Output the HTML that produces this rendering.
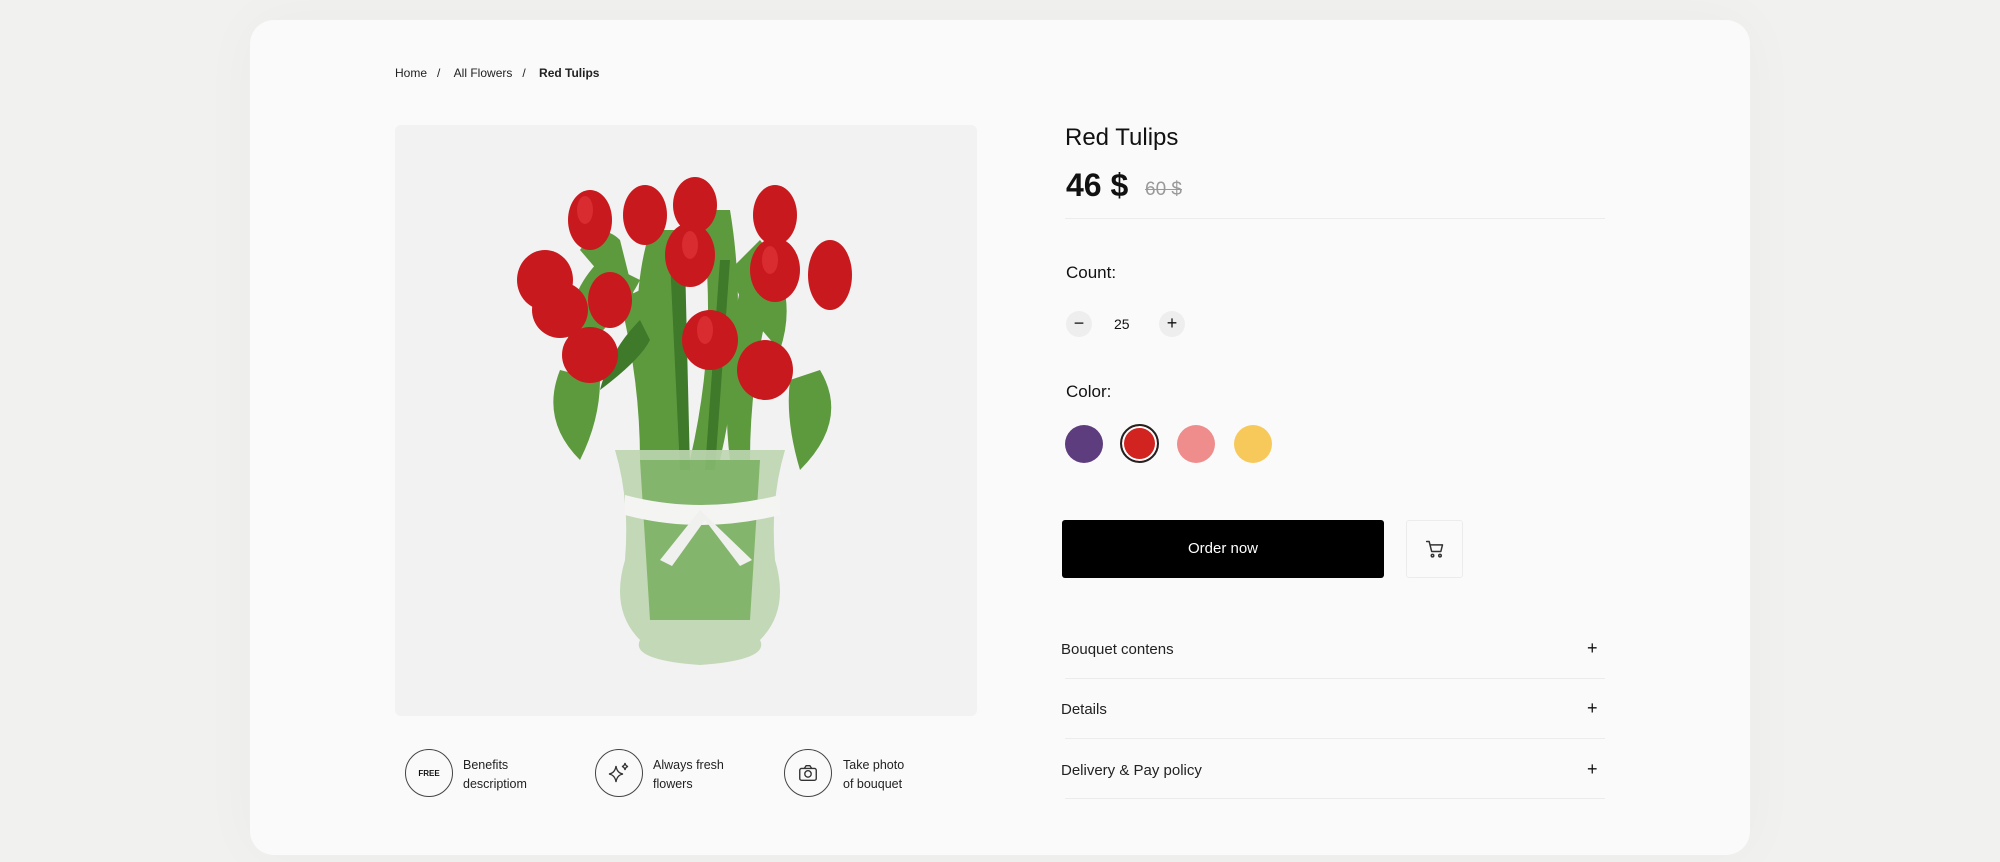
<!DOCTYPE html>
<html><head><meta charset="utf-8"><style>
*{margin:0;padding:0;box-sizing:border-box}
body{width:2000px;height:862px;background:#f1f1ef;font-family:"Liberation Sans",sans-serif;color:#111;position:relative;overflow:hidden}
.card{position:absolute;left:250px;top:20px;width:1500px;height:835px;background:#fafafa;border-radius:24px;box-shadow:0 0 60px rgba(0,0,0,0.03)}
.a{position:absolute;white-space:nowrap}
.crumb{top:66px;left:395px;font-size:12px;color:#222}
.img{left:395px;top:125px;width:582px;height:591px;background:#f2f2f2;border-radius:6px}
.circ{border-radius:50%}
.acc{font-size:15px;color:#222}
.plus{font-size:18px;color:#111}
.div{position:absolute;height:1px;background:#ececec;left:1065px;width:540px}
.ben{width:48px;height:48px;border:1.5px solid #444;border-radius:50%;top:749px;display:flex;align-items:center;justify-content:center}
.bt{font-size:12.5px;color:#222;line-height:19px;top:756px}
</style></head><body>
<div class="card"></div>
<div class="a crumb">Home&nbsp;&nbsp;&nbsp;/&nbsp;&nbsp;&nbsp;&nbsp;All Flowers&nbsp;&nbsp;&nbsp;/&nbsp;&nbsp;&nbsp;&nbsp;<b>Red Tulips</b></div>
<div class="a img">
<svg width="582" height="591" viewBox="0 0 582 591">
<g transform="translate(-395,-125)">
<g fill="#5d9a3e">
<path d="M560 370 Q540 420 580 460 Q600 420 600 380Z"/>
<path d="M820 370 Q850 420 800 470 Q785 420 790 380Z"/>
<path d="M600 260 Q560 300 570 360 Q620 320 640 280Z"/>
<path d="M760 240 Q800 290 780 350 Q740 310 730 270Z"/>
<path d="M650 230 Q620 330 660 460 L690 460 Q670 330 680 230Z"/>
<path d="M700 210 Q720 330 690 460 L720 460 Q750 330 730 210Z"/>
<path d="M620 300 Q640 380 640 460 L660 460 Q660 380 640 290Z"/>
<path d="M740 290 Q720 380 730 460 L750 460 Q750 380 770 300Z"/>
<path d="M580 250 Q600 220 620 240 L640 320 Z"/>
</g>
<g fill="#3f7a2a">
<path d="M670 260 L680 470 L690 470 L685 260Z"/>
<path d="M720 260 L705 470 L715 470 L730 260Z"/>
<path d="M640 320 Q610 350 600 390 Q640 360 650 340Z"/>
</g>
<path d="M615 450 L785 450 Q770 500 775 560 Q790 610 760 640 Q770 660 700 665 Q630 660 640 640 Q610 610 625 560 Q630 500 615 450Z" fill="#bcd5b0" opacity="0.9"/>
<path d="M640 460 L760 460 L750 620 L650 620Z" fill="#6aa64c" opacity="0.7"/>
<path d="M625 495 Q700 515 780 495 L780 515 Q700 535 625 515Z" fill="#f4f4f2"/>
<path d="M700 510 L660 560 L672 566 L705 520 L740 566 L752 560Z" fill="#f0f0ee"/>
<g fill="#c81a1e">
<ellipse cx="590" cy="220" rx="22" ry="30"/>
<ellipse cx="645" cy="215" rx="22" ry="30"/>
<ellipse cx="695" cy="205" rx="22" ry="28"/>
<ellipse cx="775" cy="215" rx="22" ry="30"/>
<ellipse cx="830" cy="275" rx="22" ry="35"/>
<ellipse cx="545" cy="280" rx="28" ry="30"/>
<ellipse cx="560" cy="310" rx="28" ry="28"/>
<ellipse cx="590" cy="355" rx="28" ry="28"/>
<ellipse cx="690" cy="255" rx="25" ry="32"/>
<ellipse cx="775" cy="270" rx="25" ry="32"/>
<ellipse cx="710" cy="340" rx="28" ry="30"/>
<ellipse cx="765" cy="370" rx="28" ry="30"/>
<ellipse cx="610" cy="300" rx="22" ry="28"/>
</g>
<g fill="#e5383c" opacity="0.6">
<ellipse cx="585" cy="210" rx="8" ry="14"/><ellipse cx="690" cy="245" rx="8" ry="14"/><ellipse cx="770" cy="260" rx="8" ry="14"/><ellipse cx="705" cy="330" rx="8" ry="14"/>
</g>
</g></svg>
</div>
<div class="a" style="left:1065px;top:124px;font-size:24px">Red Tulips</div>
<div class="a" style="left:1066px;top:167px;font-size:32px;font-weight:bold">46 $</div>
<div class="a" style="left:1145px;top:179px;font-size:19px;color:#999;text-decoration:line-through">60 $</div>
<div class="div" style="top:218px"></div>
<div class="a" style="left:1066px;top:263px;font-size:17px">Count:</div>
<div class="a circ" style="left:1066px;top:311px;width:26px;height:26px;background:#eee;text-align:center;line-height:25px;font-size:18px">−</div>
<div class="a" style="left:1114px;top:316px;font-size:14px">25</div>
<div class="a circ" style="left:1159px;top:311px;width:26px;height:26px;background:#eee;text-align:center;line-height:25px;font-size:18px">+</div>
<div class="a" style="left:1066px;top:382px;font-size:17px">Color:</div>
<div class="a circ" style="left:1065px;top:425px;width:38px;height:38px;background:#5e3d7e"></div>
<div class="a circ" style="left:1120px;top:424px;width:39px;height:39px;background:#d12421;border:2.5px solid #222;box-shadow:inset 0 0 0 2px #fff"></div>
<div class="a circ" style="left:1177px;top:425px;width:38px;height:38px;background:#ef8d8d"></div>
<div class="a circ" style="left:1234px;top:425px;width:38px;height:38px;background:#f7c95a"></div>
<div class="a" style="left:1062px;top:520px;width:322px;height:58px;background:#000;border-radius:3px;color:#fff;font-size:15px;text-align:center;line-height:58px">Order now</div>
<div class="a" style="left:1406px;top:520px;width:57px;height:58px;border:1px solid #ececec;border-radius:3px;display:flex;align-items:center;justify-content:center">
<svg width="20" height="20" viewBox="0 0 24 24" fill="none" stroke="#333" stroke-width="1.8" stroke-linecap="round" stroke-linejoin="round"><path d="M2 3h3l3 12h11l2-8H7"/><circle cx="9" cy="20" r="1.5"/><circle cx="18" cy="20" r="1.5"/></svg></div>
<div class="a acc" style="left:1061px;top:641px">Bouquet contens</div><div class="a plus" style="left:1587px;top:638px">+</div>
<div class="div" style="top:678px"></div>
<div class="a acc" style="left:1061px;top:701px">Details</div><div class="a plus" style="left:1587px;top:698px">+</div>
<div class="div" style="top:738px"></div>
<div class="a acc" style="left:1061px;top:762px">Delivery &amp; Pay policy</div><div class="a plus" style="left:1587px;top:759px">+</div>
<div class="div" style="top:798px"></div>
<div class="a ben" style="left:405px"><span style="font-size:8px;font-weight:bold">FREE</span></div>
<div class="a bt" style="left:463px">Benefits<br>descriptiom</div>
<div class="a ben" style="left:595px"><svg width="28" height="28" viewBox="0 0 28 28" fill="none" stroke="#333" stroke-width="1.3"><path d="M11 7 Q12 14 18 15 Q12 16 11 23 Q10 16 4 15 Q10 14 11 7Z"/><path d="M20 4 Q20.5 7 23 7.5 Q20.5 8 20 11 Q19.5 8 17 7.5 Q19.5 7 20 4Z"/></svg></div>
<div class="a bt" style="left:653px">Always fresh<br>flowers</div>
<div class="a ben" style="left:784px"><svg width="22" height="22" viewBox="0 0 24 24" fill="none" stroke="#333" stroke-width="1.5"><rect x="3" y="7" width="18" height="13" rx="2"/><path d="M8 7l2-3h4l2 3"/><circle cx="12" cy="13" r="3.5"/></svg></div>
<div class="a bt" style="left:843px">Take photo<br>of bouquet</div>
</body></html>
